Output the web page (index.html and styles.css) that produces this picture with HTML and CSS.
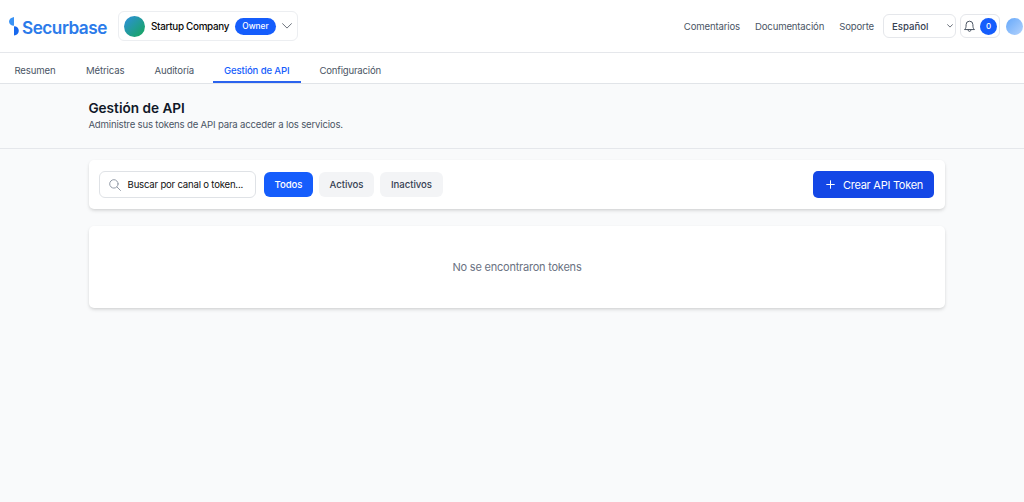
FILE: index.html
```html
<!DOCTYPE html>
<html lang="es">
<head>
<meta charset="utf-8">
<title>Gestión de API</title>
<link rel="stylesheet" href="styles.css">
</head>
<body>
<header class="topbar">
  <div class="brand">
    <svg class="brand-mark" width="12" height="19" viewBox="0 0 12 19">
      <path d="M5 0v8.800C2 8.800 0 7 0 4.600S2 .6 5 0z" fill="#3b93f5"/>
      <path d="M5 9.200C7.900 9.300 9.800 11 9.800 13.700S7.900 18 5 18.600z" fill="#1768ee"/>
    </svg>
    <span class="brand-name">Securbase</span>
  </div>
  <button class="company">
    <span class="company-logo"></span>
    <span class="company-name">Startup Company</span>
    <span class="role">Owner</span>
    <svg class="chevron" width="10" height="6" viewBox="0 0 10 6"><path d="M.5.6 5 5.100 9.500.6"/></svg>
  </button>
  <nav class="links">
    <a>Comentarios</a>
    <a>Documentación</a>
    <a>Soporte</a>
  </nav>
  <button class="language"><span>Español</span>
    <svg class="chevron" width="6" height="4" viewBox="0 0 6 4"><path d="M.5.6 3 3.100 5.500.6"/></svg>
  </button>
  <button class="alerts">
    <svg class="bell" width="11" height="13" viewBox="0 0 11 13"><path d="M.8 9.300C1.900 8.400 2.100 7.200 2.100 4.600a3.400 3.400 0 0 1 6.800 0c0 2.600.2 3.800 1.300 4.700zM3.900 9.500a1.600 1.900 0 0 0 3.200 0"/></svg>
    <span class="count">0</span>
  </button>
  <span class="avatar"></span>
</header>
<nav class="tabs">
  <a class="tab">Resumen</a>
  <a class="tab">Métricas</a>
  <a class="tab">Auditoría</a>
  <a class="tab active">Gestión de API</a>
  <a class="tab">Configuración</a>
</nav>
<section class="heading">
  <h1>Gestión de API</h1>
  <p>Administre sus tokens de API para acceder a los servicios.</p>
</section>
<main>
  <section class="card toolbar">
    <div class="search">
      <svg width="12" height="12" viewBox="0 0 12 12"><circle cx="4.900" cy="4.900" r="4.200"/><path d="m8 8 3.500 3.500"/></svg>
      <span>Buscar por canal o token...</span>
    </div>
    <div class="filters">
      <button class="filter all selected">Todos</button>
      <button class="filter on">Activos</button>
      <button class="filter off">Inactivos</button>
    </div>
    <button class="create">
      <svg width="9" height="9" viewBox="0 0 9 9"><path d="M4.500.7v7.600M.7 4.500h7.600"/></svg>
      <span>Crear API Token</span>
    </button>
  </section>
  <section class="card empty"><span>No se encontraron tokens</span></section>
</main>
</body>
</html>
```
FILE: styles.css
```css
* { box-sizing: border-box; }
body {
  margin: 0;
  min-height: 502px;
  background: #f9fafb;
  color: #4a5565;
  font-family: Inter, "Liberation Sans", sans-serif;
  font-size: 9.6px;
  overflow: hidden;
}
button { font: inherit; margin: 0; padding: 0; border: 0; background: #fff; color: inherit; }
svg { display: block; flex: none; fill: none; stroke-linecap: round; stroke-linejoin: round; }
span, a { white-space: nowrap; }
.topbar { display: flex; align-items: center; height: 53px; padding-left: 9px; background: #fff; border-bottom: 1px solid #e5e7eb; }
.brand { display: flex; align-items: center; width: 109px; flex: none; }
.brand-mark { margin-top: 1px; }
.brand-name { margin: 3px 0 0 1px; color: #2b7bea; font-size: 17.2px; font-weight: 600; letter-spacing: -.5px; line-height: 22px; }
.company { display: flex; align-items: center; width: 180px; height: 30px; flex: none; padding-left: 5px; border: 1px solid #eceef1; border-radius: 6px; }
.company-logo { width: 21px; height: 21px; border-radius: 50%; background: linear-gradient(135deg, #2e8fe0, #16a757); }
.company-name { width: 79px; margin-left: 6px; color: #0a0a0a; font-size: 9.9px; font-weight: 500; letter-spacing: -.3px; text-align: left; }
.role { width: 41px; height: 17px; margin-left: 5px; border-radius: 9px; background: #155dfc; color: #fff; font-size: 8.3px; font-weight: 500; line-height: 17px; text-align: center; }
.chevron { stroke: #6b727c; stroke-width: 1; }
.company .chevron { margin-left: 6px; }
.links { display: flex; gap: 15px; margin-left: auto; letter-spacing: -.16px; }
.language { display: flex; align-items: center; justify-content: space-between; width: 73px; height: 24px; margin-left: 9px; padding: 0 2px 0 8px; border: 1px solid #e5e7eb; border-radius: 6px; color: #364153; font-weight: 500; flex: none; }
.alerts { display: flex; align-items: center; width: 40px; height: 24px; margin-left: 4px; padding-left: 3px; border: 1px solid #e5e7eb; border-radius: 6px; flex: none; }
.bell { stroke: #4b5563; stroke-width: 1; }
.count { width: 17px; height: 17px; margin-left: 5px; border-radius: 50%; background: #155dfc; color: #fff; font-size: 8px; font-weight: 500; line-height: 17px; text-align: center; }
.avatar { width: 17px; height: 17px; margin: 0 1px 0 6px; border-radius: 50%; background: linear-gradient(135deg, #65a8fa, #b4d3fd); flex: none; }
.tabs { display: flex; gap: 8px; height: 31px; padding-left: 3.4px; background: #fff; border-bottom: 1px solid #e1e4e8; letter-spacing: -.13px; }
.tab { height: 30px; padding: 6px 11px 0; line-height: 24px; }
.tab:nth-child(2) { margin-left: .4px; }
.active { border-bottom: 2px solid #2b63ee; color: #155dfc; font-weight: 500; letter-spacing: -.14px; }
.tab:last-child { letter-spacing: -.2px; }
.heading { height: 65px; padding: 16px 88.4px 0; border-bottom: 1px solid #e5e7eb; }
h1 { margin: 0; color: #101828; font-size: 13.6px; font-weight: 600; line-height: 17px; }
p { margin: 0; line-height: 15px; letter-spacing: -.18px; }
main { display: flex; flex-direction: column; gap: 17px; padding: 11px 79px 0 89px; }
.card { background: #fff; border-radius: 5px; box-shadow: 0 2px 4px -1px rgba(0,0,0,.16), 0 1px 3px rgba(0,0,0,.05); }
.toolbar { display: flex; align-items: center; height: 49px; padding: 0 11px 0 10px; }
.search { display: flex; align-items: center; width: 157px; height: 27px; padding-left: 9px; border: 1px solid #dfe2e6; border-radius: 6px; color: #111; letter-spacing: -.21px; }
.search svg { stroke: #929aa7; stroke-width: 1; }
.search span { margin-left: 6.6px; }
.filters { display: flex; gap: 6px; margin-left: 8px; }
.filter { height: 25px; border-radius: 6px; background: #f3f4f6; color: #364153; font-weight: 500; letter-spacing: -.04px; }
.all { width: 49px; }
.on { width: 55px; }
.off { width: 63px; }
.selected { background: #155dfc; color: #fff; }
.create { display: flex; align-items: center; width: 121px; height: 27px; margin-left: auto; padding-left: 13px; border-radius: 5px; background: #1447e6; color: #fff; font-size: 11px; letter-spacing: -.27px; }
.create svg { stroke: #fff; stroke-width: 1; }
.create span { margin-left: 8px; }
.empty { display: flex; align-items: center; justify-content: center; height: 82px; color: #6a7282; font-size: 11px; letter-spacing: -.22px; }
```
